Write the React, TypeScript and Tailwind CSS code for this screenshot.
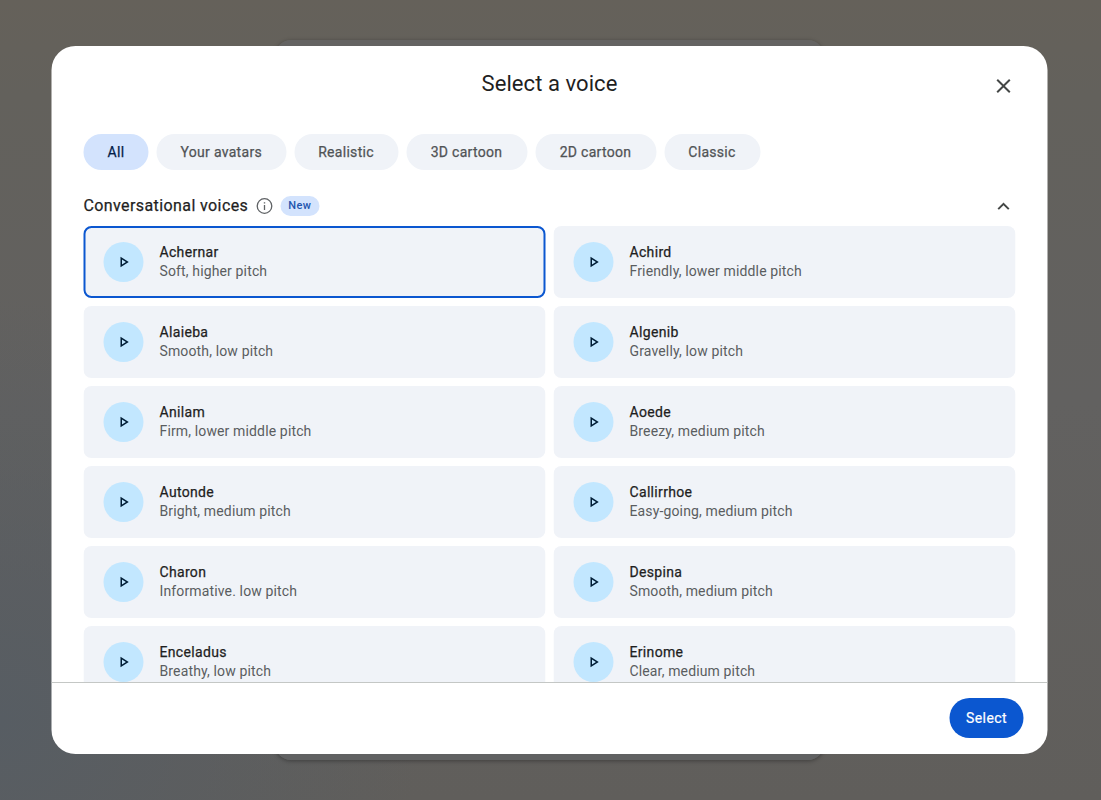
import { useState } from "react";

type Voice = { name: string; description: string };

const filters = [
  { label: "All", width: "w-[65px]" },
  { label: "Your avatars", width: "w-[129.5px]" },
  { label: "Realistic", width: "w-[104px]" },
  { label: "3D cartoon", width: "w-[121px]" },
  { label: "2D cartoon", width: "w-[121px]" },
  { label: "Classic", width: "w-24" },
];

const voices: Voice[] = [
  { name: "Achernar", description: "Soft, higher pitch" },
  { name: "Achird", description: "Friendly, lower middle pitch" },
  { name: "Alaieba", description: "Smooth, low pitch" },
  { name: "Algenib", description: "Gravelly, low pitch" },
  { name: "Anilam", description: "Firm, lower middle pitch" },
  { name: "Aoede", description: "Breezy, medium pitch" },
  { name: "Autonde", description: "Bright, medium pitch" },
  { name: "Callirrhoe", description: "Easy-going, medium pitch" },
  { name: "Charon", description: "Informative. low pitch" },
  { name: "Despina", description: "Smooth, medium pitch" },
  { name: "Enceladus", description: "Breathy, low pitch" },
  { name: "Erinome", description: "Clear, medium pitch" },
];

function Icon({ d, className }: { d: string; className: string }) {
  return (
    <svg viewBox="0 0 24 24" fill="currentColor" aria-hidden="true" className={className}>
      <path d={d} />
    </svg>
  );
}

function VoiceCard({ voice, selected, onSelect }: { voice: Voice; selected: boolean; onSelect: () => void }) {
  return (
    <div
      onClick={onSelect}
      className={
        selected
          ? "flex h-18 cursor-pointer items-center rounded-lg border-2 border-[#0b57d0] bg-[#f0f3f8] px-[18px]"
          : "flex h-18 cursor-pointer items-center rounded-lg border-2 border-transparent bg-[#f0f3f8] px-[18px]"
      }
    >
      <span className="flex size-10 shrink-0 items-center justify-center rounded-full bg-[#c2e7ff] text-[#001d35]">
        <Icon className="size-[18px]" d="M8 5v14l11-7L8 5zm2 3.64L15.27 12 10 15.36V8.64z" />
      </span>
      <div className="ml-4 text-sm leading-[19px]">
        <div className="tracking-[0.33px] text-[#1f1f1f] [-webkit-text-stroke:0.25px_currentColor]">{voice.name}</div>
        <div className="tracking-[0.14px] text-[#5a5d60]">{voice.description}</div>
      </div>
    </div>
  );
}

export default function App() {
  const [filter, setFilter] = useState("All");
  const [selected, setSelected] = useState("Achernar");

  return (
    <div className="relative h-[800px] w-full overflow-hidden bg-[radial-gradient(ellipse_420px_420px_at_0%_90%,#575d63_0%,#5a5e6200_100%),linear-gradient(180deg,#65615a_0%,#63615c_12%,#626160_50%,#605e5b_100%)] font-['Roboto','Open_Sans',sans-serif]">
      <div className="absolute top-10 left-[275px] h-[720px] w-[549px] rounded-2xl bg-[linear-gradient(180deg,#646362,#606162)] shadow-[0_1px_4px_rgba(0,0,0,0.35)]" />

      <div className="relative -translate-x-[0.5px] pt-[46px] pl-[52px]">
        <div className="flex h-[708px] w-[996px] flex-col overflow-hidden rounded-[24px] bg-white">
          <header className="grid h-20 shrink-0 grid-cols-[40px_1fr_40px] items-center px-6">
            <h1 className="col-start-2 -mt-1 text-center text-[22px] leading-7 tracking-[0.06px] text-[#1f1f1f]">Select a voice</h1>
            <button aria-label="Close" className="flex size-10 items-center justify-center text-[#444746]">
              <Icon className="size-6" d="M19 6.41 17.59 5 12 10.59 6.41 5 5 6.41 10.59 12 5 17.59 6.41 19 12 13.41 17.59 19 19 17.59 13.41 12z" />
            </button>
          </header>

          <div className="min-h-0 flex-1 overflow-hidden px-8 pt-2">
            <div className="flex gap-2">
              {filters.map((f) => (
                <button
                  key={f.label}
                  onClick={() => setFilter(f.label)}
                  className={`${f.width} h-9 rounded-full text-sm tracking-[0.3px] whitespace-nowrap [-webkit-text-stroke:0.25px_currentColor] ${
                    filter === f.label ? "bg-[#d3e3fd] text-[#041e49]" : "bg-[#f0f3f8] text-[#505356]"
                  }`}
                >
                  {f.label}
                </button>
              ))}
            </div>

            <div className="mt-6 flex h-6 items-center">
              <h2 className="w-[165px] text-base tracking-[0.4px] whitespace-nowrap text-[#1f1f1f] [-webkit-text-stroke:0.25px_currentColor]">
                Conversational voices
              </h2>
              <svg viewBox="0 0 20 20" aria-hidden="true" className="ml-1.5 size-5 text-[#5f6265]">
                <circle cx="10" cy="10" r="7.3" fill="none" stroke="currentColor" strokeWidth="1.3" />
                <path d="M9.35 9h1.3v5h-1.3zM9.3 6.2h1.4v1.4H9.3z" fill="currentColor" />
              </svg>
              <span className="ml-1.5 flex h-5 w-[38.5px] items-center justify-center rounded-full bg-[#d3e3fd] pt-px text-[11px] font-medium tracking-[0.3px] text-[#1f55ae]">
                New
              </span>
              <Icon className="ml-auto size-6 translate-y-[0.4px] text-[#444746]" d="m12 8-6 6 1.41 1.41L12 10.83l4.59 4.58L18 14z" />
            </div>

            <div className="mt-2 grid grid-cols-2 gap-2">
              {voices.map((v) => (
                <VoiceCard key={v.name} voice={v} selected={selected === v.name} onSelect={() => setSelected(v.name)} />
              ))}
            </div>
          </div>

          <footer className="flex h-18 shrink-0 items-start justify-end border-t border-[#c4c7c5] px-6 pt-[15px]">
            <button className="h-10 w-[74px] rounded-full bg-[#0b57d0] text-sm tracking-[0.4px] text-white [-webkit-text-stroke:0.2px_currentColor]">
              Select
            </button>
          </footer>
        </div>
      </div>
    </div>
  );
}
